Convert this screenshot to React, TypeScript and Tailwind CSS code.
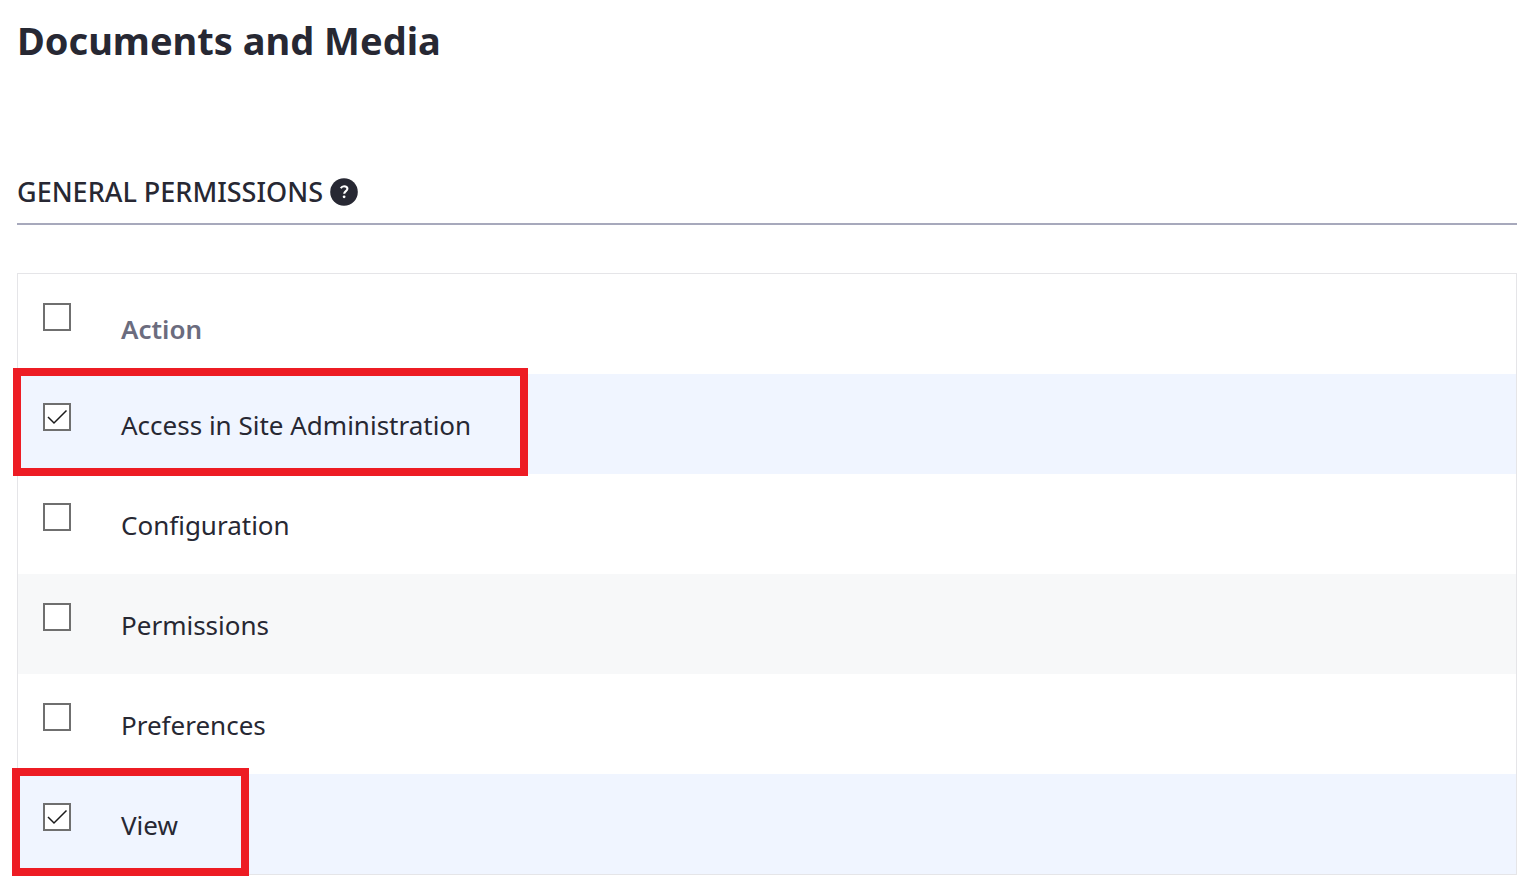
import { useState } from "react";

const actions = [
  { name: "Access in Site Administration", checked: true, mark: "-left-[5px] -top-[6px] h-[108px] w-[515px]" },
  { name: "Configuration", checked: false },
  { name: "Permissions", checked: false },
  { name: "Preferences", checked: false },
  { name: "View", checked: true, mark: "-left-[6px] -top-[6px] h-[108px] w-[237px]" },
];

function Checkbox({ id, label, checked, onChange }: { id: string; label?: string; checked: boolean; onChange: () => void }) {
  return (
    <span className="relative block size-7">
      <input
        id={id}
        type="checkbox"
        aria-label={label}
        checked={checked}
        onChange={onChange}
        className="block size-7 appearance-none border-2 border-[#6f6f6f] bg-white"
      />
      {checked && (
        <svg viewBox="0 0 28 28" className="pointer-events-none absolute inset-0 size-7" fill="none" stroke="#1a1a1a" strokeWidth="1.5">
          <path d="M5 14 L11 20 L23.5 7.5" />
        </svg>
      )}
    </span>
  );
}

export default function App() {
  const [state, setState] = useState(actions.map((a) => a.checked));
  const all = state.every(Boolean);
  const toggle = (i: number) => setState(state.map((v, j) => (i === j ? !v : v)));

  return (
    <main className="bg-white pt-4 pr-5 pb-5 pl-[17px] font-['Noto_Sans',sans-serif] text-[#272833]">
      <h1 className="text-[38px] leading-12 font-bold">Documents and Media</h1>
      <h2 className="mt-[106px] flex items-center gap-[7px] border-b-2 border-[#a7a9bc] pb-[9px] text-[27px] leading-11 font-medium">
        GENERAL PERMISSIONS
        <button type="button" aria-label="Help">
          <svg viewBox="0 0 28 28" className="size-7">
            <circle cx="14" cy="14" r="13.8" fill="#272833" />
            <path d="M10.8 10.2C11.5 8.9 12.6 8.2 14.1 8.2c2 0 3.3 1 3.3 2.6 0 2.2-3.2 2.4-3.2 4.9" fill="none" stroke="#fff" strokeWidth="2.1" />
            <circle cx="14.1" cy="18.8" r="1.4" fill="#fff" />
          </svg>
        </button>
      </h2>
      <div className="mt-12 border border-[#e5e5e8]">
        <table className="w-full border-collapse text-left text-[26px] leading-9">
          <thead>
            <tr className="h-[100px]">
              <th className="w-[103px] pt-[29px] pl-[25px] align-top">
                <Checkbox id="all" label="Select all" checked={all} onChange={() => setState(state.map(() => !all))} />
              </th>
              <th className="pt-[10px] font-semibold text-[#6b6c7e]">Action</th>
            </tr>
          </thead>
          <tbody>
            {actions.map((a, i) => (
              <tr key={a.name} className={`relative h-[100px] ${a.mark ? "z-10" : ""} ${state[i] ? "bg-[#f0f5ff]" : i === 2 ? "bg-[#f7f8f9]" : "bg-white"}`}>
                <td className="pt-[29px] pl-[25px] align-top">
                  <Checkbox id={`action-${i}`} checked={state[i]} onChange={() => toggle(i)} />
                  {a.mark && <span className={`pointer-events-none absolute border-8 border-[#ed1c24] ${a.mark}`} />}
                </td>
                <td className="pt-0.5">
                  <label htmlFor={`action-${i}`}>{a.name}</label>
                </td>
              </tr>
            ))}
          </tbody>
        </table>
      </div>
    </main>
  );
}
